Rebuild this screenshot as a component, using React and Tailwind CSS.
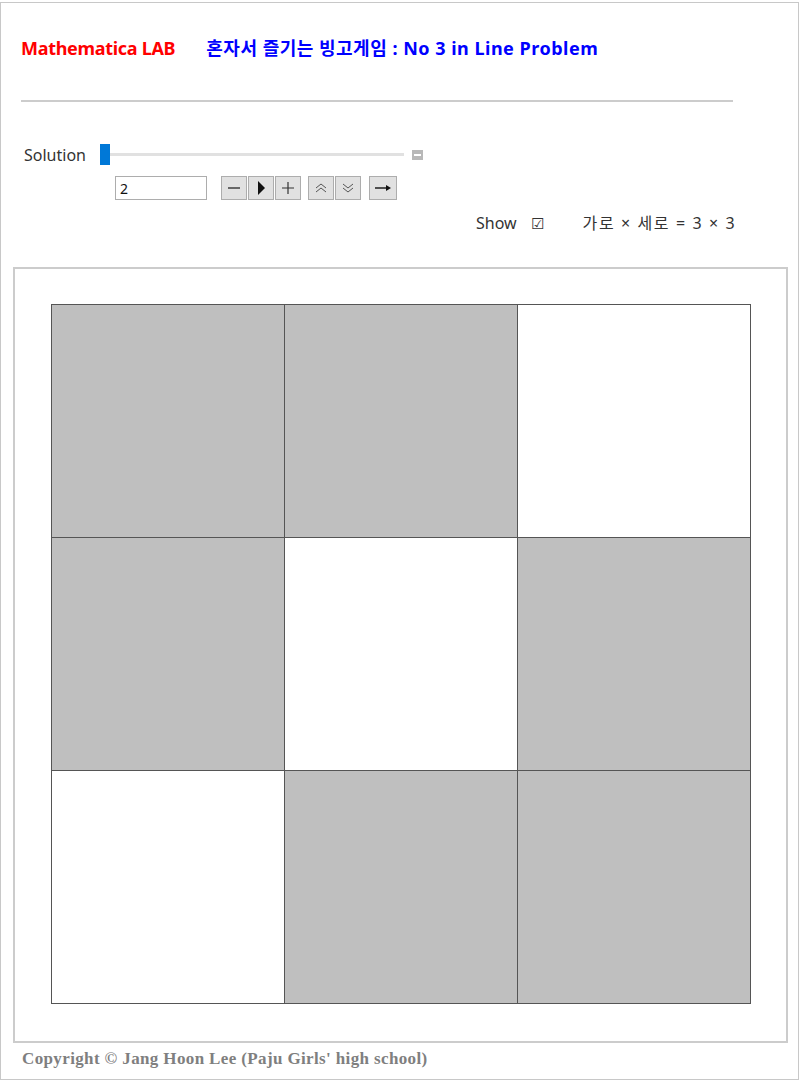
import React from "react";

const cells = [1, 1, 0, 1, 0, 1, 0, 1, 1];

function Btn({ children, className = "" }) {
  return (
    <div className={"flex h-[24px] w-[26px] items-center justify-center border border-[#adadad] bg-[#e1e1e1] " + className}>
      {children}
    </div>
  );
}

export default function App() {
  return (
    <div className="bg-white">
      <div className="mt-[2px] h-[1078px] w-[799px] border border-[#c8c8c8] bg-white font-['Noto_Sans','Noto_Sans_CJK_KR',sans-serif]">
        <div className="ml-[20px] mt-[33px] flex items-center text-[18px] font-bold leading-[24px]">
          <span className="tracking-[-0.3px] text-[#ff0000]">Mathematica LAB</span>
          <span className="ml-[31px] tracking-[0.5px] text-[#0000ff]">혼자서 즐기는 빙고게임 : No 3 in Line Problem</span>
        </div>
        <div className="ml-[20px] mt-[40px] h-[2px] w-[712px] bg-[#cccccc]" />
        <div className="ml-[23px] mt-[42px] flex items-center">
          <span className="w-[76px] text-[16px] leading-[20px] text-[#333]">Solution</span>
          <div className="flex items-center">
            <div className="h-[21px] w-[10px] bg-[#0078d7]" />
            <div className="h-[3px] w-[294px] bg-[#e1e1e1]" />
            <div className="ml-[8px] flex h-[10px] w-[11px] items-center justify-center bg-[#b8b8b8]">
              <div className="h-[2px] w-[7px] bg-white" />
            </div>
          </div>
        </div>
        <div className="ml-[114px] mt-[11px] flex items-center">
          <div className="flex h-[24px] w-[92px] items-center border border-[#adadad] px-[4px] text-[14px] text-[#111]">2</div>
          <div className="ml-[14px] flex gap-[1px]">
            <Btn>
              <svg width="14" height="14" viewBox="0 0 14 14"><path d="M1 7h12" stroke="#333" strokeWidth="1.4" /></svg>
            </Btn>
            <Btn>
              <svg width="14" height="16" viewBox="0 0 14 16"><path d="M4 1L11 8L4 15Z" fill="#111" /></svg>
            </Btn>
            <Btn>
              <svg width="14" height="14" viewBox="0 0 14 14"><path d="M1 7h12M7 1v12" stroke="#333" strokeWidth="1.2" /></svg>
            </Btn>
          </div>
          <div className="ml-[7px] flex gap-[1px]">
            <Btn>
              <svg width="14" height="14" viewBox="0 0 14 14"><path d="M2 7l5-4 5 4M2 11l5-4 5 4" stroke="#555" strokeWidth="1" fill="none" /></svg>
            </Btn>
            <Btn>
              <svg width="14" height="14" viewBox="0 0 14 14"><path d="M2 3l5 4 5-4M2 7l5 4 5-4" stroke="#555" strokeWidth="1" fill="none" /></svg>
            </Btn>
          </div>
          <Btn className="ml-[8px] w-[28px]">
            <svg width="18" height="14" viewBox="0 0 18 14"><path d="M1 7h12" stroke="#111" strokeWidth="1.4" /><path d="M12 4l5 3-5 3z" fill="#111" /></svg>
          </Btn>
        </div>
        <div className="ml-[475px] mt-[11px] flex items-center text-[16px] leading-[24px] text-[#333]">
          <span>Show</span>
          <span className="ml-[14px] text-[15px]">☑</span>
          <span className="ml-[39px] tracking-[1.6px]">가로 × 세로 = 3 × 3</span>
        </div>
        <div className="ml-[12px] mt-[32px] h-[776px] w-[775px] border-2 border-[#cccccc] pl-[36px] pt-[35px]">
          <div className="grid w-[700px] grid-cols-3 border-l border-t border-[#555]">
            {cells.map((c, i) => (
              <div key={i} className={"h-[233px] border-b border-r border-[#555] " + (c ? "bg-[#bfbfbf]" : "bg-white")} />
            ))}
          </div>
        </div>
        <div className="ml-[21px] mt-[4px] font-['Liberation_Serif',serif] text-[17px] font-bold leading-[24px] tracking-[0.37px] text-[#7f7f7f]">
          Copyright © Jang Hoon Lee (Paju Girls' high school)
        </div>
      </div>
    </div>
  );
}
